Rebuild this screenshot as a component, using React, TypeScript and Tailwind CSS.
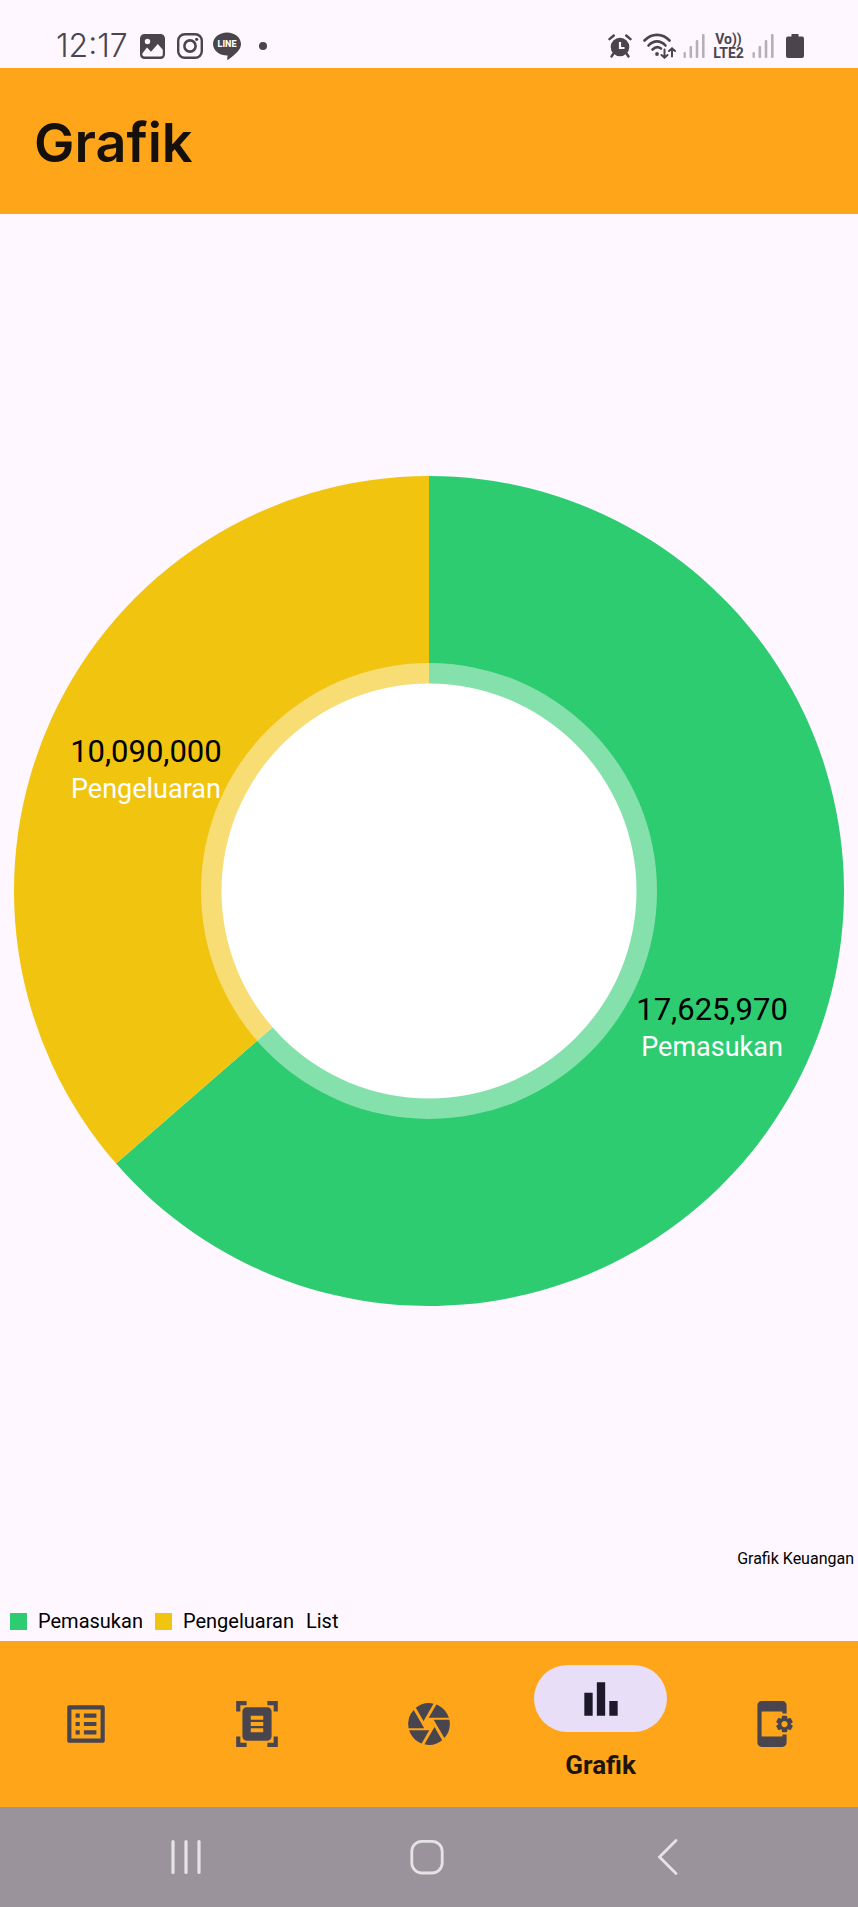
import type { ReactNode } from 'react';
import {
  MdAppSettingsAlt,
  MdBarChart,
  MdCamera,
  MdDocumentScanner,
  MdListAlt,
} from 'react-icons/md';

type Slice = { label: string; value: number; color: string; swatch: string };

const slices: Slice[] = [
  { label: 'Pemasukan', value: 17625970, color: '#2ecc71', swatch: 'bg-[#2ecc71]' },
  { label: 'Pengeluaran', value: 10090000, color: '#f1c40f', swatch: 'bg-[#f1c40f]' },
];

const CENTER = 429;
const RADIUS = 415;

function pointAt(fraction: number, radius: number) {
  const angle = fraction * Math.PI * 2;
  return {
    x: CENTER + radius * Math.sin(angle),
    y: CENTER - radius * Math.cos(angle),
  };
}

function DonutChart({ data }: { data: Slice[] }) {
  const total = data.reduce((sum, slice) => sum + slice.value, 0);
  let start = 0;
  const arcs = data.map((slice) => {
    const from = start;
    const to = start + slice.value / total;
    start = to;
    const a = pointAt(from, RADIUS);
    const b = pointAt(to, RADIUS);
    const large = to - from > 0.5 ? 1 : 0;
    return {
      ...slice,
      path: `M${CENTER} ${CENTER}L${a.x} ${a.y}A${RADIUS} ${RADIUS} 0 ${large} 1 ${b.x} ${b.y}Z`,
      middle: pointAt((from + to) / 2, 311),
    };
  });

  return (
    <svg viewBox="0 0 858 858" className="block w-full" role="img" aria-label="Grafik Keuangan">
      {arcs.map((arc) => (
        <path key={arc.label} d={arc.path} fill={arc.color} />
      ))}
      <circle cx={CENTER} cy={CENTER} r="228" fill="#ffffff" fillOpacity="0.42" />
      <circle cx={CENTER} cy={CENTER} r="207.5" fill="#ffffff" />
      {arcs.map((arc) => (
        <g key={arc.label} textAnchor="middle">
          <text x={arc.middle.x} y={arc.middle.y} fontSize="31" fill="#000000">
            {arc.value.toLocaleString('en-US')}
          </text>
          <text x={arc.middle.x} y={arc.middle.y + 36} fontSize="27" fill="#ffffff">
            {arc.label}
          </text>
        </g>
      ))}
    </svg>
  );
}

function SignalBars() {
  return (
    <svg viewBox="0 0 22 24" className="h-6 w-[22px]" fill="#b5afb8" aria-hidden="true">
      <rect x="0.5" y="18" width="2.4" height="6" rx="1" />
      <rect x="6.5" y="12" width="2.6" height="12" rx="1" />
      <rect x="12.7" y="6" width="2.6" height="18" rx="1" />
      <rect x="19" y="0" width="2.6" height="24" rx="1" />
    </svg>
  );
}

function StatusBar() {
  return (
    <div className="flex items-center justify-between pt-[26px] pr-[54px] pb-[2px] pl-14 text-[#4a444d]">
      <div className="flex items-center">
        <span className="font-['Inter',sans-serif] text-[32px] leading-10 font-light">12:17</span>
        <svg viewBox="0 0 25 25" className="ml-3 size-[25px]" aria-hidden="true">
          <path
            fill="currentColor"
            fillRule="evenodd"
            d="M4.5 0h16A4.5 4.5 0 0 1 25 4.5v16a4.5 4.5 0 0 1-4.5 4.5h-16A4.5 4.5 0 0 1 0 20.5v-16A4.5 4.5 0 0 1 4.5 0ZM2.3 19.5L7 13.6l4 4.2 6.8-7.8 5 5.8v4.2a2.5 2.5 0 0 1-2.5 2.5H4.8a2.5 2.5 0 0 1-2.5-2.5ZM7.5 4.8a2.7 2.7 0 1 1 0 5.4 2.7 2.7 0 0 1 0-5.4Z"
          />
        </svg>
        <svg viewBox="0 0 26 26" className="ml-3 size-[26px]" fill="none" stroke="currentColor" aria-hidden="true">
          <rect x="1.2" y="1.2" width="23.6" height="23.6" rx="6.5" strokeWidth="2.4" />
          <circle cx="13" cy="13" r="5.6" strokeWidth="2.6" />
          <circle cx="19.7" cy="6.3" r="1.6" fill="currentColor" stroke="none" />
        </svg>
        <svg viewBox="0 0 28 28" className="ml-[10px] size-7" aria-hidden="true">
          <path
            fill="currentColor"
            d="M14 0.5c7.7 0 14 5.1 14 11.5 0 5.5-5 9.8-12.6 15.6-.8.6-1.3.2-1.2-.6l.4-3.4C6.5 23.6 0 18.5 0 12 0 5.6 6.3.5 14 .5Z"
          />
          <text x="14" y="15" textAnchor="middle" fontSize="9" fontWeight="800" fill="#ffffff">
            LINE
          </text>
        </svg>
        <span className="ml-[18px] size-2 rounded-full bg-[#4a444d]" />
      </div>
      <div className="flex items-center">
        <svg viewBox="0 0 24 24" className="size-6" fill="none" stroke="currentColor" strokeLinecap="round" aria-hidden="true">
          <circle cx="12" cy="13" r="9.3" fill="currentColor" stroke="none" />
          <path d="M1.5 5.2L5.8 1.5M22.5 5.2L18.2 1.5" strokeWidth="2.4" />
          <path d="M5.5 19.5L3.5 22.5M18.5 19.5l2 3" strokeWidth="2.4" />
          <path d="M12 8v6h4.5" stroke="#fef7ff" strokeWidth="2.2" strokeLinecap="butt" />
        </svg>
        <svg viewBox="0 0 34 26" className="ml-[11px] h-[26px] w-[34px]" fill="none" stroke="currentColor" strokeWidth="2.6" strokeLinecap="round" aria-hidden="true">
          <path d="M1.5 7.5C8.5 0 19.5 0 26.5 7.5" />
          <path d="M5.5 12.5C10.5 7 17.5 7 22.5 12.5" />
          <path d="M9.5 16.5C12.5 13.5 15.5 13.5 18 15.5" />
          <circle cx="14" cy="21" r="1.9" fill="currentColor" stroke="none" />
          <path d="M21.5 16.5v8M18.5 22l3 2.7 3-2.7M29 23.5v-8M26 18l3-2.7 3 2.7" strokeWidth="2" />
        </svg>
        <span className="ml-[6px] flex items-center">
          <SignalBars />
        </span>
        <span className="flex w-[47px] flex-col items-center text-center text-sm leading-[14px] font-bold">
          <span>Vo))</span>
          <span>LTE2</span>
        </span>
        <SignalBars />
        <svg viewBox="0 0 18 24" className="ml-3 h-6 w-[18px]" fill="currentColor" aria-hidden="true">
          <path d="M5.5 0h7v2.5H16a2 2 0 0 1 2 2V22a2 2 0 0 1-2 2H2a2 2 0 0 1-2-2V4.5a2 2 0 0 1 2-2h3.5Z" />
        </svg>
      </div>
    </div>
  );
}

function NavItem({ label, children }: { label: string; children: ReactNode }) {
  return (
    <a href="#" aria-label={label} className="flex items-center justify-center text-[#49454f]">
      {children}
    </a>
  );
}

export default function App() {
  return (
    <div className="flex min-h-screen flex-col bg-[#fef7ff] font-['Roboto',sans-serif]">
      <StatusBar />

      <header className="bg-[#ffa51a] px-[34px] pt-[39px] pb-[35px]">
        <h1 className="font-['Inter',sans-serif] text-[54px] leading-[72px] font-semibold text-[#15100b]">
          Grafik
        </h1>
      </header>

      <main className="flex flex-1 flex-col">
        <div className="flex flex-1 items-center pt-6">
          <DonutChart data={slices} />
        </div>
        <p className="pr-1 text-right text-base leading-[30px] text-black">Grafik Keuangan</p>
        <ul className="flex items-center px-[10px] pt-8 pb-[5px] text-xl leading-[30px] text-black">
          {slices.map((slice) => (
            <li key={slice.label} className="mr-3 flex items-center gap-[11px]">
              <span className={`size-[17px] ${slice.swatch}`} />
              {slice.label}
            </li>
          ))}
          <li>List</li>
        </ul>
      </main>

      <nav className="grid grid-cols-5 bg-[#ffa51a] pt-6 pb-[25px]" aria-label="Menu">
        <NavItem label="Daftar">
          <MdListAlt className="size-[50px]" />
        </NavItem>
        <NavItem label="Pindai">
          <MdDocumentScanner className="size-[50px]" />
        </NavItem>
        <NavItem label="Kamera">
          <MdCamera className="size-[50px]" />
        </NavItem>
        <a href="#" aria-current="page" className="flex flex-col items-center gap-4 text-[#1d192b]">
          <span className="flex h-[67px] w-[133px] items-center justify-center rounded-full bg-[#e8def8]">
            <MdBarChart className="size-[50px]" />
          </span>
          <span className="text-[26px] leading-[34px] font-bold text-[#1d1508]">Grafik</span>
        </a>
        <NavItem label="Pengaturan">
          <MdAppSettingsAlt className="size-[50px]" />
        </NavItem>
      </nav>

      <div className="grid grid-cols-3 justify-items-center bg-[#9b939b] pt-8 pr-[70px] pb-8 pl-[66px] text-[#e6e3e6]">
        <button type="button" aria-label="Aplikasi terbaru">
          <svg viewBox="0 0 36 36" className="size-9" stroke="currentColor" strokeWidth="3.2" strokeLinecap="round">
            <path d="M5 2.5v31M18 2.5v31M31 2.5v31" />
          </svg>
        </button>
        <button type="button" aria-label="Beranda">
          <svg viewBox="0 0 36 36" className="size-9" fill="none" stroke="currentColor" strokeWidth="2.8">
            <rect x="2.8" y="2.4" width="30.4" height="31.6" rx="10" />
          </svg>
        </button>
        <button type="button" aria-label="Kembali">
          <svg viewBox="0 0 36 36" className="size-9" fill="none" stroke="currentColor" strokeWidth="2.8" strokeLinecap="round">
            <path d="M26 1.5L9.5 18 26 34.5" />
          </svg>
        </button>
      </div>
    </div>
  );
}
